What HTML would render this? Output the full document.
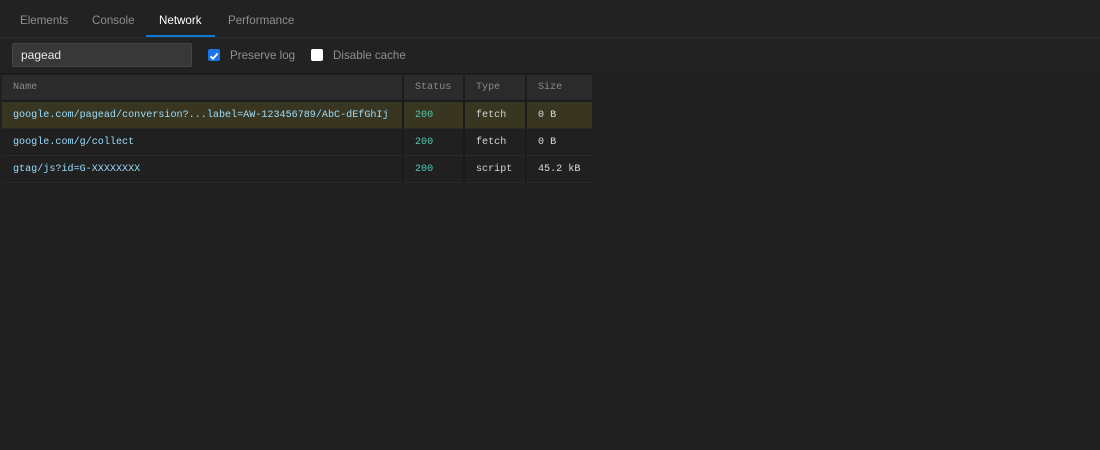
<!DOCTYPE html><html><head><style>
body{margin:0;width:1100px;height:450px;background:#202020;font-family:"Liberation Sans",sans-serif;overflow:hidden;position:relative}
.tabs{position:absolute;left:0;top:0;width:1100px;height:37px;border-bottom:1px solid #2c2c2c;background:#222}
.tab{position:absolute;top:14px;font-size:11.6px;color:#8f8f8f}
.tab.a{color:#fff}
.ul{position:absolute;left:146px;top:35px;width:69px;height:2px;background:#0e7ad3}
.bar{position:absolute;top:38px;left:0;width:1100px;height:35px;background:#222;border-bottom:1px solid #1a1a1a}
.inp{position:absolute;left:12px;top:43px;background:#383838;border:1px solid #444;border-radius:2px;color:#e8e8e8;font-size:12px;line-height:22px;padding-left:8px;box-sizing:border-box;width:180px;height:24px}
.cb{position:absolute;top:49px;width:12px;height:12px;border-radius:2px}
.lbl{position:absolute;top:49px;font-size:11.6px;color:#8f8f8f}
table{position:absolute;left:2px;top:75px;border-collapse:collapse;font-family:"Liberation Mono",monospace;font-size:10.1px;table-layout:fixed;width:590px}
td{height:26px;padding:0 0 0 11px;border-right:2px solid #1b1b1b;border-bottom:1px solid #2a2a2a;white-space:nowrap;overflow:hidden}
tr.h td{background:#2b2b2b;color:#8a8a8a;border-bottom:2px solid #1b1b1b;height:25px}
tr.s td{background:#383621}
.n{color:#9cdcfe}.st{color:#4ec9b0}.t{color:#d4d4d4}.z{color:#d7dbe2}
</style></head><body>
<div class="tabs">
<span class="tab" style="left:20px">Elements</span>
<span class="tab" style="left:92px">Console</span>
<span class="tab a" style="left:159px">Network</span>
<span class="tab" style="left:228px">Performance</span>
<div class="ul"></div></div>
<div class="bar"></div>
<div class="inp">pagead</div>
<div class="cb" style="left:208px;background:#1a73e8"><svg width="12" height="12"><path d="M2.5 6.2 5 8.7 9.6 3.5" stroke="#fff" stroke-width="1.8" fill="none"/></svg></div>
<span class="lbl" style="left:230px">Preserve log</span>
<div class="cb" style="left:311px;background:#fff"></div>
<span class="lbl" style="left:333px">Disable cache</span>
<table>
<colgroup><col style="width:401px"><col style="width:61px"><col style="width:62px"><col style="width:66px"></colgroup>
<tr class="h"><td>Name</td><td>Status</td><td>Type</td><td style="border-right:none">Size</td></tr>
<tr class="s"><td class="n">google.com/pagead/conversion?...label=AW-123456789/AbC-dEfGhIj</td><td class="st">200</td><td class="t">fetch</td><td class="z" style="border-right:none">0 B</td></tr>
<tr><td class="n">google.com/g/collect</td><td class="st">200</td><td class="t">fetch</td><td class="z" style="border-right:none">0 B</td></tr>
<tr><td class="n">gtag/js?id=G-XXXXXXXX</td><td class="st">200</td><td class="t">script</td><td class="z" style="border-right:none">45.2 kB</td></tr>
</table>
</body></html>
